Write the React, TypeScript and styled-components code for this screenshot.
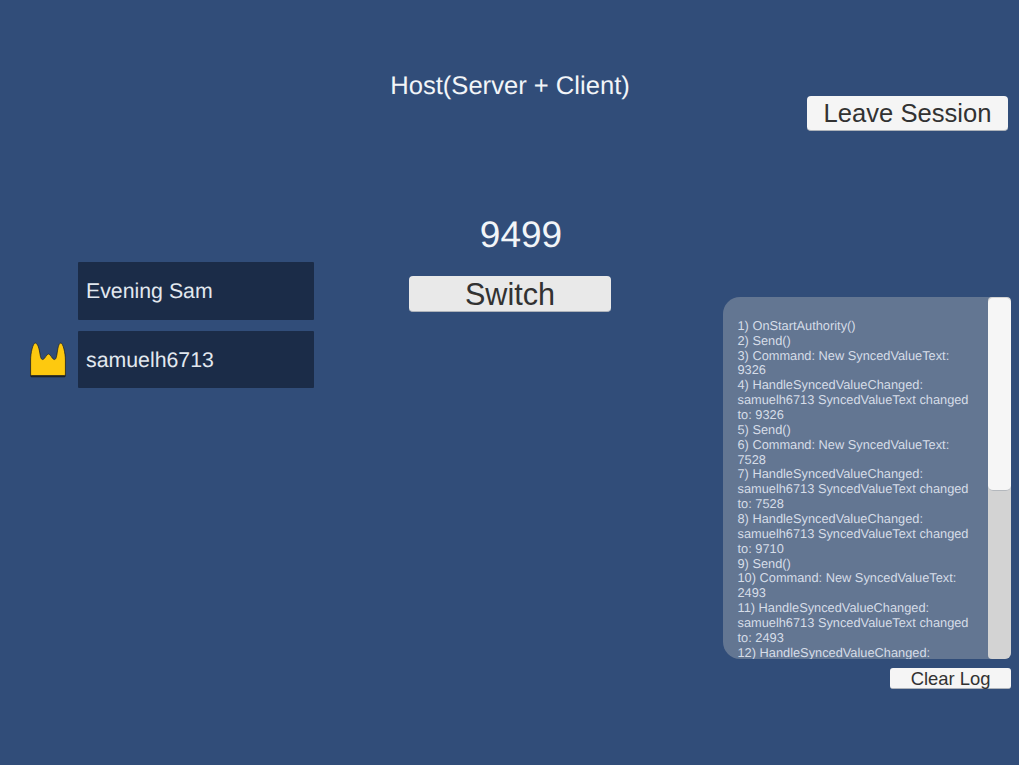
import styled, { createGlobalStyle } from 'styled-components';

const GlobalStyle = createGlobalStyle`
  html, body {
    margin: 0;
    padding: 0;
    background: #314d79;
  }
  * {
    box-sizing: border-box;
  }
`;

const Screen = styled.div`
  width: 1019px;
  height: 765px;
  overflow: hidden;
  display: grid;
  grid-template-columns: 390px 240px 389px;
  background: #314d79;
  font-family: 'Liberation Sans', Arial, sans-serif;
  text-rendering: geometricPrecision;
`;

const PlayerColumn = styled.div`
  display: flex;
  flex-direction: column;
  gap: 11px;
  padding: 262px 0 0 30px;
`;

const PlayerRow = styled.div`
  display: flex;
  align-items: center;
  gap: 12px;
`;

const CrownSlot = styled.div`
  width: 36px;
  height: 36px;
  flex: none;
`;

const PlayerName = styled.div<{ $tall?: boolean }>`
  width: 236px;
  height: ${(props) => (props.$tall ? '58px' : '57px')};
  display: flex;
  align-items: center;
  padding: 1px 0 0 8px;
  border-radius: 1px;
  background: #1b2c48;
  color: #e2e8ef;
  font-size: 21.3px;
`;

const CenterColumn = styled.div`
  display: flex;
  flex-direction: column;
  align-items: center;
`;

const Title = styled.div`
  margin-top: 72px;
  height: 29px;
  line-height: 29px;
  color: #f2f5f8;
  font-size: 25.6px;
  white-space: nowrap;
`;

const Counter = styled.div`
  margin: 113px 0 0 22px;
  height: 42px;
  line-height: 42px;
  color: #f2f5f8;
  font-size: 37px;
`;

const Button = styled.button`
  display: block;
  padding: 0;
  border: none;
  border-bottom: 1px solid #aeb3ba;
  border-radius: 4px;
  background: #f5f5f5;
  color: #323232;
  font-family: inherit;
  text-align: center;
`;

const SwitchButton = styled(Button)`
  margin-top: 20px;
  width: 202px;
  height: 36px;
  background: #e9e9e9;
  font-size: 30.6px;
  line-height: 36px;
`;

const SideColumn = styled.div`
  display: flex;
  flex-direction: column;
  align-items: flex-end;
  padding: 96px 8px 0 0;
`;

const LeaveButton = styled(Button)`
  margin-right: 3px;
  width: 201px;
  height: 35px;
  font-size: 25.6px;
  line-height: 35px;
`;

const LogPanel = styled.div`
  margin-top: 166px;
  width: 288px;
  height: 362px;
  display: flex;
  border-radius: 17px 4px 6px 17px;
  background: #637692;
  overflow: hidden;
`;

const LogText = styled.div`
  flex: 1;
  padding: 21.8px 15px 0 14.5px;
  color: #d6dde8;
  font-size: 12.8px;
  line-height: 14.86px;
  overflow: hidden;
`;

const LogLine = styled.div`
  width: 236px;
`;

const ScrollTrack = styled.div`
  width: 23px;
  flex: none;
  border-radius: 4px;
  background: #d3d3d3;
`;

const ScrollThumb = styled.div`
  height: 193px;
  margin-top: 1px;
  border-radius: 5px;
  border-bottom: 1px solid #b4b8bd;
  background: #f6f6f6;
`;

const ClearButton = styled(Button)`
  margin-top: 9px;
  width: 121px;
  height: 21px;
  border-radius: 3px;
  font-size: 18.4px;
  line-height: 21px;
`;

const logEntries = [
  '1) OnStartAuthority()',
  '2) Send()',
  '3) Command: New SyncedValueText: 9326',
  '4) HandleSyncedValueChanged: samuelh6713 SyncedValueText changed to: 9326',
  '5) Send()',
  '6) Command: New SyncedValueText: 7528',
  '7) HandleSyncedValueChanged: samuelh6713 SyncedValueText changed to: 7528',
  '8) HandleSyncedValueChanged: samuelh6713 SyncedValueText changed to: 9710',
  '9) Send()',
  '10) Command: New SyncedValueText: 2493',
  '11) HandleSyncedValueChanged: samuelh6713 SyncedValueText changed to: 2493',
  '12) HandleSyncedValueChanged:',
];

function Crown() {
  const shape =
    'M0.6 32V18C0.6 11 3 1 5.2 1C7.8 1 9.200 7 10 12C10.600 16 11.500 18 13 17.500C15 17 16.500 12 18.500 12C20.500 12 22 17 24 17.500C25.500 18 26.400 16 27 12C27.800 7 28.500 1 30.800 1C33 1 35.400 11 35.400 18V32C35.400 33 35 33.500 34 33.500H2C1 33.500 0.600 33 0.600 32Z';
  return (
    <svg width='36' height='36' viewBox='0 0 36 36'>
      <path d={shape} transform='translate(0 1.5)' fill='#1c2126' stroke='#1c2126' strokeWidth='0.6' />
      <path d={shape} fill='#fdc90f' stroke='#1c2126' strokeWidth='0.7' />
    </svg>
  );
}

export default function App() {
  return (
    <Screen>
      <GlobalStyle />
      <PlayerColumn>
        <PlayerRow>
          <CrownSlot />
          <PlayerName $tall>Evening Sam</PlayerName>
        </PlayerRow>
        <PlayerRow>
          <CrownSlot>
            <Crown />
          </CrownSlot>
          <PlayerName>samuelh6713</PlayerName>
        </PlayerRow>
      </PlayerColumn>
      <CenterColumn>
        <Title>Host(Server + Client)</Title>
        <Counter>9499</Counter>
        <SwitchButton>Switch</SwitchButton>
      </CenterColumn>
      <SideColumn>
        <LeaveButton>Leave Session</LeaveButton>
        <LogPanel>
          <LogText>
            {logEntries.map((entry) => (
              <LogLine key={entry}>{entry}</LogLine>
            ))}
          </LogText>
          <ScrollTrack>
            <ScrollThumb />
          </ScrollTrack>
        </LogPanel>
        <ClearButton>Clear Log</ClearButton>
      </SideColumn>
    </Screen>
  );
}
